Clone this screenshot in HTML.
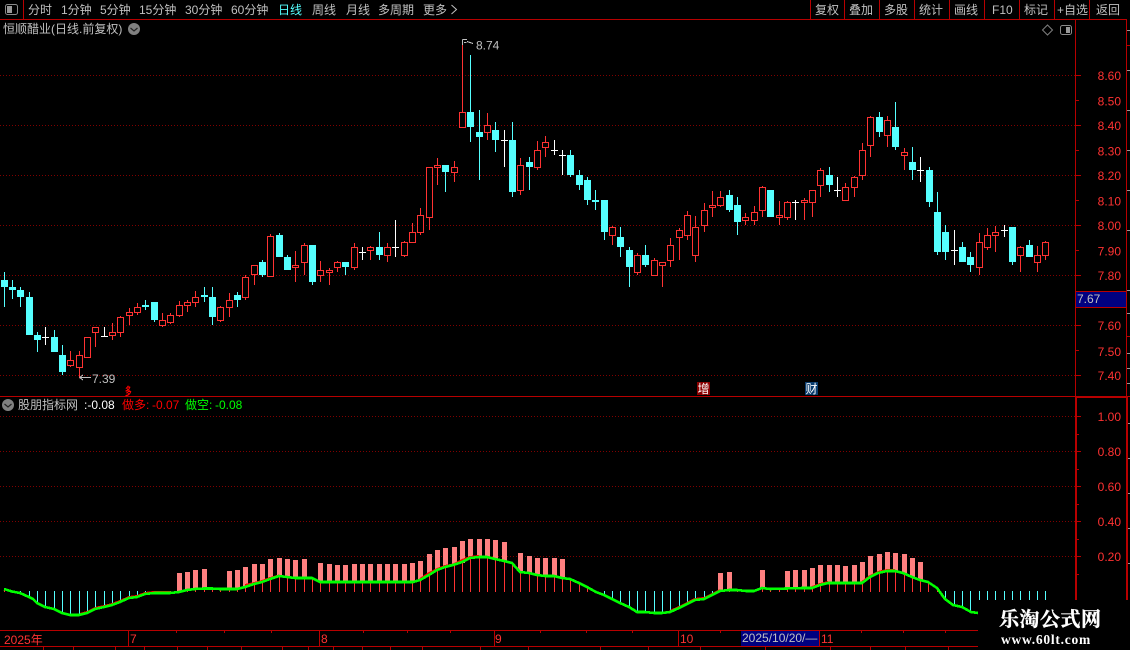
<!DOCTYPE html>
<html><head><meta charset="utf-8"><style>
html,body{margin:0;padding:0;background:#000;width:1130px;height:650px;overflow:hidden}
svg{display:block}
text{font-family:"Liberation Sans","WenQuanYi Zen Hei","Noto Sans CJK SC",sans-serif;font-size:12px}
.g{fill:#c0c0c0}.r{fill:#ff3232}
</style></head><body>
<svg width="1130" height="650" viewBox="0 0 1130 650" xmlns="http://www.w3.org/2000/svg">
<rect width="1130" height="650" fill="#000"/>
<!-- grid -->
<path d="M0 75.5H1075M0 125.5H1075M0 175.5H1075M0 225.5H1075M0 275.5H1075M0 325.5H1075M0 375.5H1075M0 416.5H1075M0 451.5H1075M0 486.5H1075M0 521.5H1075M0 556.5H1075" stroke="#800000" stroke-dasharray="1 2" fill="none"/>
<!-- frame -->
<g shape-rendering="crispEdges" fill="none" stroke="#b80000">
<path d="M0 19.5H1127M23.5 0V19M810.5 0V19M844.5 0V19M879.5 0V19M914.5 0V19M949.5 0V19M984.5 0V19M1019.5 0V19M1054.5 0V19M1089.5 0V19"/>
<path d="M1075.5 19V396M1126.5 19V396M0 396.5H1130M1076 397.5H1127"/>
<path d="M1076 397V630M1127 397V630" stroke-width="2"/>
<path d="M0 630.5H1130M0 646.5H1130"/>
<path d="M128.5 630V646M319.5 630V646M494.5 630V646M678.5 630V646M819.5 630V646"/>
<path d="M176.5 631V633M224.5 631V633M271.5 631V633M363.5 631V633M407.5 631V633M450.5 631V633M540.5 631V633M586.5 631V633M632.5 631V633M720.5 631V633M861.5 631V633M903.5 631V633M945.5 631V633"/>
<path d="M43.5 647V650M73.5 647V650M115.5 647V650M144.5 647V650M177.5 647V650M207.5 647V650M241.5 647V650M282.5 647V650M308.5 647V650M333.5 647V650M362.5 647V650M390.5 647V650M422.5 647V650M480.5 647V650M528.5 647V650M600.5 647V650M648.5 647V650M700.5 647V650M765.5 647V650M830.5 647V650M870.5 647V650M905.5 647V650M948.5 647V650"/>
<path d="M1076 75.5H1081M1076 125.5H1081M1076 175.5H1081M1076 225.5H1081M1076 275.5H1081M1076 325.5H1081M1076 375.5H1081M1076 100.5H1079M1076 150.5H1079M1076 200.5H1079M1076 250.5H1079M1076 350.5H1079"/>
<path d="M1077 416.5H1081M1077 451.5H1081M1077 486.5H1081M1077 521.5H1081M1077 556.5H1081M1077 434.5H1079M1077 469.5H1079M1077 504.5H1079M1077 539.5H1079M1077 574.5H1079"/>
<path d="M1127 45.5H1130M1127 336.5H1130"/>
</g>
<path d="M1127 30.5H1130M1127 70.5H1130M1127 110.5H1130M1127 150.5H1130M1127 190.5H1130M1127 230.5H1130M1127 290.5H1130M1127 313.5H1130M1127 353.5H1130M1127 368.5H1130M1127 383.5H1130M1128 423.5H1130M1128 458.5H1130M1128 493.5H1130M1128 528.5H1130M1128 563.5H1130" stroke="#999" shape-rendering="crispEdges"/>

<!-- candles: cyan -->
<g shape-rendering="crispEdges">
<path fill="none" stroke="#55ffff" d="M4.5 272V307M12.5 280V299M20.5 287V307M29.5 292V335M37.5 332V352M54.5 330V352M62.5 345V375M145.5 300V310M154.5 302V322M204.5 287V302M212.5 287V325M237.5 292V307M262.5 260V277M279.5 233V257M287.5 255V270M312.5 245V285M345.5 262V275M379.5 232V260M445.5 165V192M470.5 55V142M479.5 110V180M495.5 122V152M512.5 122V197M529.5 157V190M570.5 150V177M579.5 170V190M587.5 177V205M595.5 190V210M604.5 200V240M620.5 227V257M629.5 247V287M645.5 245V267M729.5 190V212M737.5 197V235M770.5 190V217M829.5 167V192M879.5 112V137M895.5 102V150M912.5 147V180M929.5 167V207M937.5 192V255M945.5 225V260M962.5 242V262M970.5 252V272M1012.5 227V265M1029.5 240V257"/>
<path fill="#55ffff" d="M1 280h7V287h-7zM9 287h7V290h-7zM17 290h7V297h-7zM26 297h7V335h-7zM34 335h7V340h-7zM51 337h7V352h-7zM59 355h7V372h-7zM142 305h7V307h-7zM151 302h7V320h-7zM201 295h7V297h-7zM209 297h7V317h-7zM234 295h7V300h-7zM259 262h7V275h-7zM276 235h7V257h-7zM284 257h7V270h-7zM309 245h7V282h-7zM342 262h7V267h-7zM376 247h7V255h-7zM442 165h7V172h-7zM467 112h7V127h-7zM476 132h7V137h-7zM492 130h7V140h-7zM509 140h7V192h-7zM526 162h7V167h-7zM567 155h7V175h-7zM576 175h7V185h-7zM584 180h7V200h-7zM592 200h7V202h-7zM601 200h7V232h-7zM617 237h7V247h-7zM626 250h7V267h-7zM642 255h7V265h-7zM726 195h7V210h-7zM734 205h7V222h-7zM767 190h7V217h-7zM826 175h7V185h-7zM876 117h7V132h-7zM892 127h7V147h-7zM909 162h7V170h-7zM926 170h7V202h-7zM934 212h7V252h-7zM942 232h7V252h-7zM959 247h7V262h-7zM967 257h7V265h-7zM1009 227h7V262h-7zM1026 245h7V257h-7z"/>
<!-- red wicks -->
<path fill="none" stroke="#ff3232" d="M70.5 351V367M79.5 351V378M87.5 337V358M95.5 327V347M112.5 323V340M120.5 316V337M129.5 308V325M137.5 303V315M162.5 313V327M170.5 313V324M179.5 301V317M187.5 300V312M195.5 291V307M220.5 306V322M229.5 293V317M245.5 275V300M254.5 265V285M270.5 234V277M295.5 251V282M304.5 243V275M320.5 261V282M329.5 268V285M337.5 261V272M354.5 243V270M370.5 246V260M387.5 243V262M404.5 241V257M412.5 223V243M420.5 208V235M429.5 167V230M437.5 158V185M454.5 161V182M462.5 43V128M487.5 113V140M520.5 158V195M537.5 141V170M545.5 136V157M612.5 226V245M637.5 253V275M654.5 258V276M662.5 262V287M670.5 238V267M679.5 228V260M687.5 211V240M695.5 216V262M704.5 203V232M712.5 191V217M720.5 191V207M745.5 213V225M754.5 206V225M762.5 186V217M779.5 201V225M787.5 201V220M804.5 198V220M812.5 190V217M820.5 168V197M845.5 183V201M854.5 176V197M862.5 143V180M870.5 116V157M887.5 116V147M904.5 148V170M979.5 233V275M987.5 228V250M995.5 226V252M1020.5 246V272M1037.5 246V272M1045.5 241V260"/>
<!-- red bodies -->
<path fill="#000" stroke="#ff3232" d="M67.5 360.5h6V365.5h-6zM76.5 355.5h6V367.5h-6zM84.5 337.5h6V357.5h-6zM92.5 327.5h6V332.5h-6zM109.5 332.5h6V335.5h-6zM117.5 317.5h6V332.5h-6zM126.5 312.5h6V315.5h-6zM134.5 307.5h6V312.5h-6zM159.5 320.5h6V325.5h-6zM167.5 315.5h6V322.5h-6zM176.5 305.5h6V315.5h-6zM184.5 302.5h6V305.5h-6zM192.5 297.5h6V302.5h-6zM217.5 307.5h6V320.5h-6zM226.5 300.5h6V307.5h-6zM242.5 277.5h6V297.5h-6zM251.5 265.5h6V274.5h-6zM267.5 236.5h6V276.5h-6zM292.5 265.5h6V267.5h-6zM301.5 245.5h6V262.5h-6zM317.5 270.5h6V275.5h-6zM326.5 270.5h6V272.5h-6zM334.5 262.5h6V267.5h-6zM351.5 247.5h6V267.5h-6zM367.5 247.5h6V250.5h-6zM384.5 247.5h6V255.5h-6zM401.5 242.5h6V255.5h-6zM409.5 232.5h6V242.5h-6zM417.5 215.5h6V232.5h-6zM426.5 167.5h6V217.5h-6zM434.5 165.5h6V167.5h-6zM451.5 167.5h6V172.5h-6zM459.5 112.5h6V127.5h-6zM484.5 125.5h6V132.5h-6zM517.5 165.5h6V190.5h-6zM534.5 150.5h6V167.5h-6zM542.5 142.5h6V147.5h-6zM609.5 227.5h6V235.5h-6zM634.5 255.5h6V272.5h-6zM651.5 260.5h6V275.5h-6zM659.5 262.5h6V265.5h-6zM667.5 245.5h6V260.5h-6zM676.5 230.5h6V237.5h-6zM684.5 215.5h6V235.5h-6zM692.5 227.5h6V255.5h-6zM701.5 210.5h6V225.5h-6zM709.5 205.5h6V207.5h-6zM717.5 197.5h6V205.5h-6zM742.5 217.5h6V220.5h-6zM751.5 212.5h6V220.5h-6zM759.5 187.5h6V210.5h-6zM776.5 215.5h6V217.5h-6zM784.5 202.5h6V217.5h-6zM801.5 200.5h6V202.5h-6zM809.5 190.5h6V202.5h-6zM817.5 170.5h6V185.5h-6zM842.5 187.5h6V200.5h-6zM851.5 177.5h6V187.5h-6zM859.5 150.5h6V175.5h-6zM867.5 117.5h6V145.5h-6zM884.5 120.5h6V135.5h-6zM901.5 152.5h6V155.5h-6zM976.5 242.5h6V267.5h-6zM984.5 235.5h6V247.5h-6zM992.5 232.5h6V235.5h-6zM1017.5 247.5h6V255.5h-6zM1034.5 255.5h6V262.5h-6zM1042.5 242.5h6V255.5h-6z"/>
<!-- white -->
<path fill="none" stroke="#fff" d="M45.5 327V345M42 337.5h7M104.5 327V337M101 336.5h7M362.5 247V260M359 252.5h7M395.5 220V257M392 247.5h7M504.5 130V167M501 140.5h7M554.5 140V155M551 150.5h7M562.5 150V175M559 155.5h7M795.5 200V220M792 202.5h7M837.5 177V197M834 190.5h7M920.5 157V182M917 170.5h7M954.5 230V265M951 250.5h7M1004.5 225V237M1001 230.5h7"/>
</g>

<!-- annotations -->
<path fill="none" stroke="#c0c0c0" d="M462.5 39.5H467M462.5 39.5V45M464 42.5H466.5M467 41.5L473 43.5M79.5 377.5H91M79.5 377.5L83 375M79.5 377.5L83 380" shape-rendering="crispEdges"/>
<text x="476" y="49.5" class="g">8.74</text>
<text x="92" y="383" class="g">7.39</text>
<text transform="translate(125,395) scale(.6,1)" fill="#ff0000" style="font-size:11px;font-weight:bold">多</text>
<rect x="697" y="382" width="13" height="13" fill="#8b0000"/>
<text x="697.5" y="393" fill="#fff">增</text>
<rect x="805" y="382" width="13" height="13" fill="#0b3d6e"/>
<text x="805.5" y="393" fill="#fff">财</text>

<!-- volume-like indicator -->
<g shape-rendering="crispEdges">
<path fill="none" stroke="#ff3232" d="M4.5 590V592M170.5 591V592M179.5 590V592M187.5 588V592M195.5 588V592M204.5 587V592M212.5 588V592M220.5 588V592M229.5 588V592M237.5 588V592M245.5 586V592M254.5 582V592M262.5 581V592M270.5 577V592M279.5 576V592M287.5 576V592M295.5 578V592M304.5 577V592M312.5 578V592M320.5 581V592M329.5 582V592M337.5 582V592M345.5 582V592M354.5 582V592M362.5 582V592M370.5 581V592M379.5 581V592M387.5 581V592M395.5 581V592M404.5 581V592M412.5 581V592M420.5 579V592M429.5 572V592M437.5 568V592M445.5 566V592M454.5 564V592M462.5 562V592M470.5 557V592M479.5 556V592M487.5 556V592M495.5 558V592M504.5 560V592M512.5 563V592M520.5 571V592M529.5 573V592M537.5 574V592M545.5 575V592M554.5 575V592M562.5 577V592M570.5 579V592M579.5 583V592M587.5 587V592M720.5 590V592M729.5 589V592M737.5 590V592M745.5 590V592M762.5 587V592M770.5 588V592M779.5 589V592M787.5 588V592M795.5 588V592M804.5 588V592M812.5 586V592M820.5 584V592M829.5 582V592M837.5 582V592M845.5 582V592M854.5 582V592M862.5 581V592M870.5 576V592M879.5 572V592M887.5 570V592M895.5 570V592M904.5 572V592M912.5 576V592M920.5 579V592M928.5 582V592M937.5 587V592"/>
<path fill="#ff8080" d="M177 573h5V592h-5zM185 572h5V590h-5zM193 570h5V589h-5zM202 569h5V588h-5zM227 571h5V589h-5zM235 570h5V589h-5zM243 567h5V587h-5zM252 564h5V583h-5zM260 564h5V582h-5zM268 559h5V578h-5zM277 558h5V577h-5zM285 559h5V577h-5zM293 560h5V579h-5zM302 559h5V578h-5zM318 563h5V582h-5zM327 564h5V583h-5zM335 565h5V583h-5zM343 565h5V583h-5zM352 564h5V583h-5zM360 564h5V583h-5zM368 564h5V582h-5zM377 564h5V582h-5zM385 564h5V582h-5zM393 564h5V582h-5zM402 564h5V582h-5zM410 563h5V582h-5zM418 561h5V580h-5zM427 554h5V573h-5zM435 550h5V569h-5zM443 548h5V567h-5zM452 547h5V565h-5zM460 541h5V563h-5zM468 539h5V558h-5zM477 539h5V557h-5zM485 539h5V557h-5zM493 540h5V559h-5zM502 542h5V561h-5zM518 553h5V572h-5zM527 556h5V574h-5zM535 558h5V575h-5zM543 558h5V576h-5zM552 558h5V576h-5zM560 559h5V578h-5zM718 573h5V591h-5zM727 572h5V590h-5zM760 570h5V588h-5zM785 571h5V589h-5zM793 570h5V589h-5zM802 570h5V589h-5zM810 568h5V587h-5zM818 565h5V585h-5zM827 565h5V583h-5zM835 565h5V583h-5zM843 566h5V583h-5zM852 565h5V583h-5zM860 562h5V582h-5zM868 556h5V577h-5zM877 554h5V573h-5zM885 552h5V571h-5zM893 553h5V571h-5zM902 554h5V573h-5zM910 558h5V577h-5zM918 562h5V580h-5z"/>
<path fill="none" stroke="#55ffff" d="M20.5 591V593M29.5 591V597M37.5 591V603M45.5 591V607M54.5 591V609M62.5 591V613M70.5 591V615M79.5 591V615M87.5 591V613M95.5 591V609M104.5 591V607M112.5 591V605M120.5 591V602M129.5 591V598M137.5 591V597M145.5 591V594M154.5 591V593M162.5 591V593M604.5 591V595M612.5 591V599M620.5 591V603M629.5 591V607M637.5 591V612M645.5 591V612M654.5 591V613M662.5 591V613M670.5 591V612M679.5 591V608M687.5 591V604M695.5 591V600M704.5 591V599M712.5 591V595M945.5 591V599M954.5 591V605M962.5 591V607M970.5 591V612M979.5 591V600M987.5 591V600M995.5 591V600M1004.5 591V600M1012.5 591V600M1020.5 591V600M1029.5 591V600M1037.5 591V600M1045.5 591V600"/>
<path fill="none" stroke="#ff0000" stroke-width="2" d="M80 614L87 612L95 608L104 606L112 604L120 601L129 597L137 596L145 593L154 592L170 592M245 585L254 583L262 581L270 578L279 575.5M420 579L429 573L437 569L445 566L453 564.5L462 560L470 557L479 556M670 611L679 607L687 603L695 599L704 598L712 594L720 590M812 587L820 584L828 582M862 582L870 576L878 572L887 570L895 570"/>
<path fill="none" stroke="#00ff00" stroke-width="2.6" d="M4 589L12 591.5L20 593L29 597L33 599L37 603L45 607L54 609L62 613L70 615L79 615L87 613L95 609L104 607L112 605L120 602L129 598L137 597L145 594L154 593L162 593L170 593L179 592L187 590L195 589L204 588.5L212 588.5L220 589L229 589L237 589L245 587L254 584L262 582L270 579L279 576L287 577L295 578L304 578L312 578L320 582L413 582L420 580L429 575L437 570L445 567L453 565L462 562L470 558L479 557L487 557L495 559L504 561L512 563L520 572L529 573L537 575L545 576L554 576L562 578L570 579L579 583L587 587L596 592L604 595L612 599L620 603L629 607L637 612L645 612L654 613L662 613L670 612L679 608L687 604L695 600L704 599L712 595L720 591L729 590L737 590L746 591L754 591L762 588L770 589L803 588L812 588L820 585L828 583L862 583L870 577L878 573L887 571L895 571L903 573L912 577L920 580L928 582L937 588L945 599L953 605L962 607L971 612L978 613"/>
</g>

<!-- watermark box -->
<rect x="978" y="600" width="152" height="50" fill="#000"/>
<text x="999" y="626" fill="#fff" stroke="#fff" stroke-width=".35" style="font-family:'Noto Serif CJK SC','Liberation Serif',serif;font-size:20px;font-weight:bold;letter-spacing:.5px">乐淘公式网</text>
<text x="1001" y="644" fill="#fff" style="font-family:'Liberation Serif',serif;font-size:13.5px;font-weight:bold;letter-spacing:.75px">www.60lt.com</text>

<!-- axis labels -->
<g class="r" text-anchor="end">
<text x="1121" y="80">8.60</text><text x="1121" y="105.5">8.50</text><text x="1121" y="130">8.40</text><text x="1121" y="155.5">8.30</text><text x="1121" y="180">8.20</text><text x="1121" y="205.5">8.10</text><text x="1121" y="230">8.00</text><text x="1121" y="255.5">7.90</text><text x="1121" y="280">7.80</text><text x="1121" y="330">7.60</text><text x="1121" y="356">7.50</text><text x="1121" y="380">7.40</text>
<text x="1121" y="421">1.00</text><text x="1121" y="456">0.80</text><text x="1121" y="491">0.60</text><text x="1121" y="526">0.40</text><text x="1121" y="561">0.20</text>
</g>
<rect x="1075.5" y="291.5" width="51" height="16" fill="#000080" stroke="#b80000" shape-rendering="crispEdges"/>
<text x="1077" y="303" class="g">7.67</text>

<!-- time axis -->
<rect x="741" y="631" width="78" height="15" fill="#000080"/>
<text x="4" y="644" class="r">2025年</text>
<text x="130" y="643" class="r">7</text>
<text x="321" y="643" class="r">8</text>
<text x="495" y="643" class="r">9</text>
<text x="680" y="643" class="r">10</text>
<text x="742" y="642" class="g">2025/10/20/—</text>
<text x="821" y="643" class="r">11</text>

<!-- toolbar -->
<rect x="5.5" y="4.5" width="12" height="10" rx="2" fill="none" stroke="#8a8a8a"/>
<rect x="7" y="6" width="5" height="7" fill="#999"/>
<g class="g">
<text x="28" y="14">分时</text><text x="61" y="14">1分钟</text><text x="100" y="14">5分钟</text><text x="139" y="14">15分钟</text><text x="185" y="14">30分钟</text><text x="231" y="14">60分钟</text>
<text x="278" y="14" style="fill:#55ffff">日线</text>
<text x="312" y="14">周线</text><text x="346" y="14">月线</text><text x="378" y="14">多周期</text><text x="423" y="14">更多</text>
<text x="815" y="14">复权</text><text x="849" y="14">叠加</text><text x="884" y="14">多股</text><text x="919" y="14">统计</text><text x="954" y="14">画线</text><text x="992" y="14">F10</text><text x="1024" y="14">标记</text><text x="1057" y="14">+自选</text><text x="1096" y="14">返回</text>
<text x="3" y="33">恒顺醋业(日线.前复权)</text>
<text x="18" y="409">股朋指标网</text>
</g>
<path d="M451.5 5L456.5 9.5L451.5 14" fill="none" stroke="#c0c0c0"/>
<circle cx="134" cy="29" r="6" fill="#808080"/>
<path d="M130.5 28L134 31L137.5 28" fill="none" stroke="#222" stroke-width="1.2"/>
<circle cx="8" cy="405" r="6" fill="#808080"/>
<path d="M4.5 404L8 407L11.5 404" fill="none" stroke="#222" stroke-width="1.2"/>
<path d="M1047.5 25L1052.5 30L1047.5 35L1042.5 30Z" fill="none" stroke="#808080"/>
<rect x="1060.5" y="25.5" width="11" height="9" rx="2" fill="none" stroke="#8a8a8a"/>
<rect x="1066" y="27" width="4" height="6" fill="#999"/>

<!-- sub title values -->
<text x="84" y="409" fill="#fff">:-0.08</text>
<text x="122" y="409" fill="#ff0000">做多:</text>
<text x="152" y="409" fill="#ff0000">-0.07</text>
<text x="185" y="409" fill="#00ff00">做空:</text>
<text x="215" y="409" fill="#00ff00">-0.08</text>
</svg>
</body></html>
